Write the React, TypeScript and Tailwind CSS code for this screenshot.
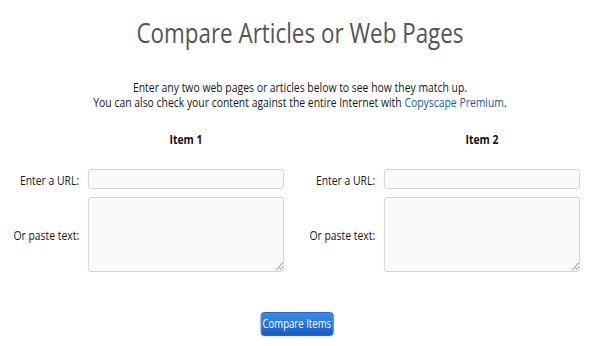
import { useState } from 'react';

// The reference is a 750px wide page squeezed to 600px, so the page is laid out at 750 and scaled on x.
const Column = ({ title }: { title: string }) => {
    const [url, setUrl] = useState('');
    const [text, setText] = useState('');

    return (
        <div className="w-[370px] grid grid-cols-[94px_245px] gap-x-[11px] gap-y-[6px] content-start">
            {/* Heading sits over the input column */}
            <div />
            <div className="text-center font-bold text-[13px] text-[#111] h-[20px] leading-[20px] mb-[14px]">{title}</div>

            <label className="text-right text-[13px] text-[#1a1a1a] self-center whitespace-nowrap pt-[2px]">Enter a URL:</label>
            <input
                value={url}
                onChange={(e) => setUrl(e.target.value)}
                className="h-[20px] bg-[#fafafa] border border-[#cfcfcf] rounded-[3px] px-1 text-[13px] outline-none"
            />

            <label className="text-right text-[13px] text-[#1a1a1a] self-center whitespace-nowrap pt-[3px]">Or paste text:</label>
            <textarea
                value={text}
                onChange={(e) => setText(e.target.value)}
                className="h-[75px] bg-[#fafafa] border border-[#cfcfcf] rounded-[3px] px-1 text-[13px] outline-none resize"
            />
        </div>
    );
};

const App = () => {
    return (
        <div className="w-[600px] h-[346px] bg-white overflow-hidden">
            <div
                className="w-[750px] h-[346px] origin-top-left scale-x-[0.8] flex flex-col items-center"
                style={{ fontFamily: '"Open Sans", sans-serif' }}
            >
                <h1 className="mt-[16px] text-[28px] leading-[32px] text-[#555] font-normal">Compare Articles or Web Pages</h1>

                <div className="mt-[32px] text-center text-[13px] leading-[15px] text-[#1a1a1a]">
                    <p>Enter any two web pages or articles below to see how they match up.</p>
                    <p>
                        You can also check your content against the entire Internet with{' '}
                        <a href="#" className="text-[#1f5ca8]">Copyscape Premium</a>.
                    </p>
                </div>

                {/* Items */}
                <div className="mt-[19px] w-full px-[5px] flex">
                    <Column title="Item 1" />
                    <Column title="Item 2" />
                </div>

                <button className="mt-[40px] ml-[-8px] h-[24px] w-[91px] rounded-[4px] text-white text-[12px] font-medium bg-gradient-to-b from-[#3a8de8] to-[#165ec2] border border-[#1456ad] shadow-sm">
                    Compare Items
                </button>
            </div>
        </div>
    );
};

export default App;
